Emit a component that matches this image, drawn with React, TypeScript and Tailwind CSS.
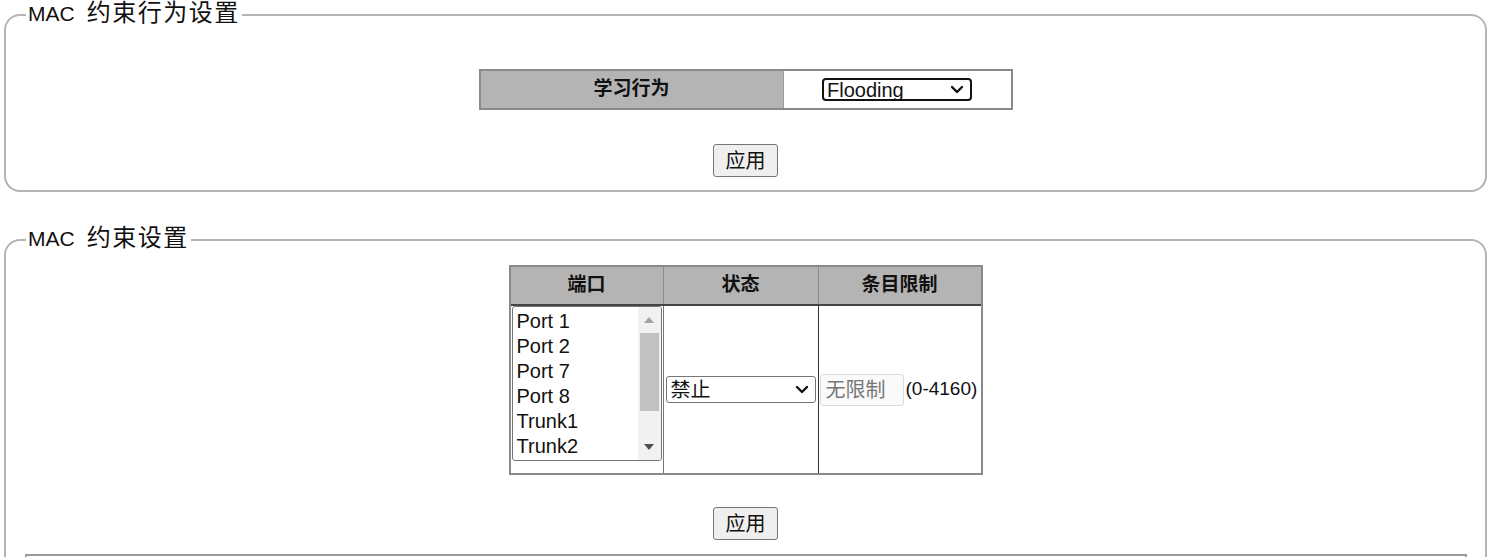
import React from "react";

const LATIN = "font-['Liberation_Sans','Noto_Sans_CJK_SC',sans-serif]";

const Chevron = ({ className = "" }: { className?: string }) => (
  <svg width="14" height="9" viewBox="0 0 14 9" className={className} fill="none" stroke="currentColor" strokeWidth="2.4" strokeLinecap="round" strokeLinejoin="round">
    <path d="M2 2l5 5 5-5" />
  </svg>
);

const Legend = ({ cjk }: { cjk: string }) => (
  <legend className="ml-[20px] px-[2px] leading-[26px] text-[#111]">
    <span className="text-[21px]">MAC</span>
    <span className="ml-[12px] text-[24px] tracking-[1.5px]">{cjk}</span>
  </legend>
);

const ApplyButton = () => (
  <div className="flex justify-center">
    <button className="h-[33px] w-[65px] rounded-[3px] border border-[#767676] bg-[#efefef] text-[20px] leading-none text-[#111]">
      应用
    </button>
  </div>
);

const PORTS = ["Port 1", "Port 2", "Port 7", "Port 8", "Trunk1", "Trunk2"];

const PortList = () => (
  <div className="flex h-[155px] w-[150px] overflow-hidden rounded-[3px] border border-[#767676] bg-white">
    <div className="flex-1 pt-[2px] pl-[4px]">
      {PORTS.map((p) => (
        <div key={p} className="h-[25px] text-[20px] leading-[25px] text-[#111]">
          {p}
        </div>
      ))}
    </div>
    <div className="flex w-[23px] flex-col bg-[#f1f1f1]">
      <div className="flex h-[26px] items-center justify-center">
        <svg width="10" height="6" viewBox="0 0 10 6"><path d="M0 6L5 0l5 6z" fill="#a3a3a3" /></svg>
      </div>
      <div className="mx-[2px] h-[78px] bg-[#c1c1c1]" />
      <div className="flex-1" />
      <div className="flex h-[26px] items-center justify-center">
        <svg width="10" height="6" viewBox="0 0 10 6"><path d="M0 0h10L5 6z" fill="#505050" /></svg>
      </div>
    </div>
  </div>
);

export default function App() {
  return (
    <div className={`${LATIN} min-h-[557px] bg-white px-[4px]`}>
      <fieldset className="rounded-[16px] border-2 border-[#b4b4b4] pb-[13px]">
        <Legend cjk="约束行为设置" />
        <div className="mt-[40px] flex justify-center">
          <div className="grid h-[41px] w-[534px] grid-cols-[303px_1fr] border-2 border-[#8a8a8a]">
            <div className="flex items-center justify-center border-r border-[#9a9a9a] bg-[#b4b4b4] text-[19px] font-bold text-[#111]">
              学习行为
            </div>
            <div className="flex items-center justify-center bg-white">
              <div className="flex h-[23px] w-[150px] items-center justify-between rounded-[4px] border-2 border-[#111] pr-[6px] pl-[3px] text-[20px] leading-none text-[#111]">
                <span>Flooding</span>
                <Chevron />
              </div>
            </div>
          </div>
        </div>
        <div className="mt-[34px]">
          <ApplyButton />
        </div>
      </fieldset>

      <fieldset className="mt-[33px] rounded-[16px] border-2 border-[#b4b4b4] pb-[20px]">
        <Legend cjk="约束设置" />
        <div className="mt-[11px] flex justify-center">
          <div className="w-[474px] border-2 border-[#8a8a8a]">
            <div className="grid h-[39px] grid-cols-[153px_155px_1fr] border-b-2 border-[#444] bg-[#b4b4b4] text-[19px] font-bold text-[#111]">
              <div className="flex items-center justify-center border-r border-[#8a8a8a]">端口</div>
              <div className="flex items-center justify-center border-r border-[#8a8a8a]">状态</div>
              <div className="flex items-center justify-center">条目限制</div>
            </div>
            <div className="grid h-[167px] grid-cols-[153px_155px_1fr]">
              <div className="border-r border-[#777] pl-[1px]">
                <PortList />
              </div>
              <div className="flex items-center justify-center border-r border-[#333]">
                <div className="flex h-[27px] w-[150px] items-center justify-between rounded-[3px] border border-[#767676] pr-[6px] pl-[4px] text-[20px] leading-none text-[#111]">
                  <span>禁止</span>
                  <Chevron />
                </div>
              </div>
              <div className="flex items-center pl-[1px]">
                <div className="flex h-[32px] w-[84px] items-center rounded-[3px] border border-[#dcdcdc] bg-[#fafafa] pl-[5px] text-[20px] leading-none text-[#777]">
                  无限制
                </div>
                <span className="ml-[2px] text-[19px] text-[#111]">(0-4160)</span>
              </div>
            </div>
          </div>
        </div>
        <div className="mt-[32px]">
          <ApplyButton />
        </div>
        <div className="mx-auto mt-[14px] h-[80px] w-[1442px] border-2 border-[#9a9a9a] bg-white" />
      </fieldset>
    </div>
  );
}
